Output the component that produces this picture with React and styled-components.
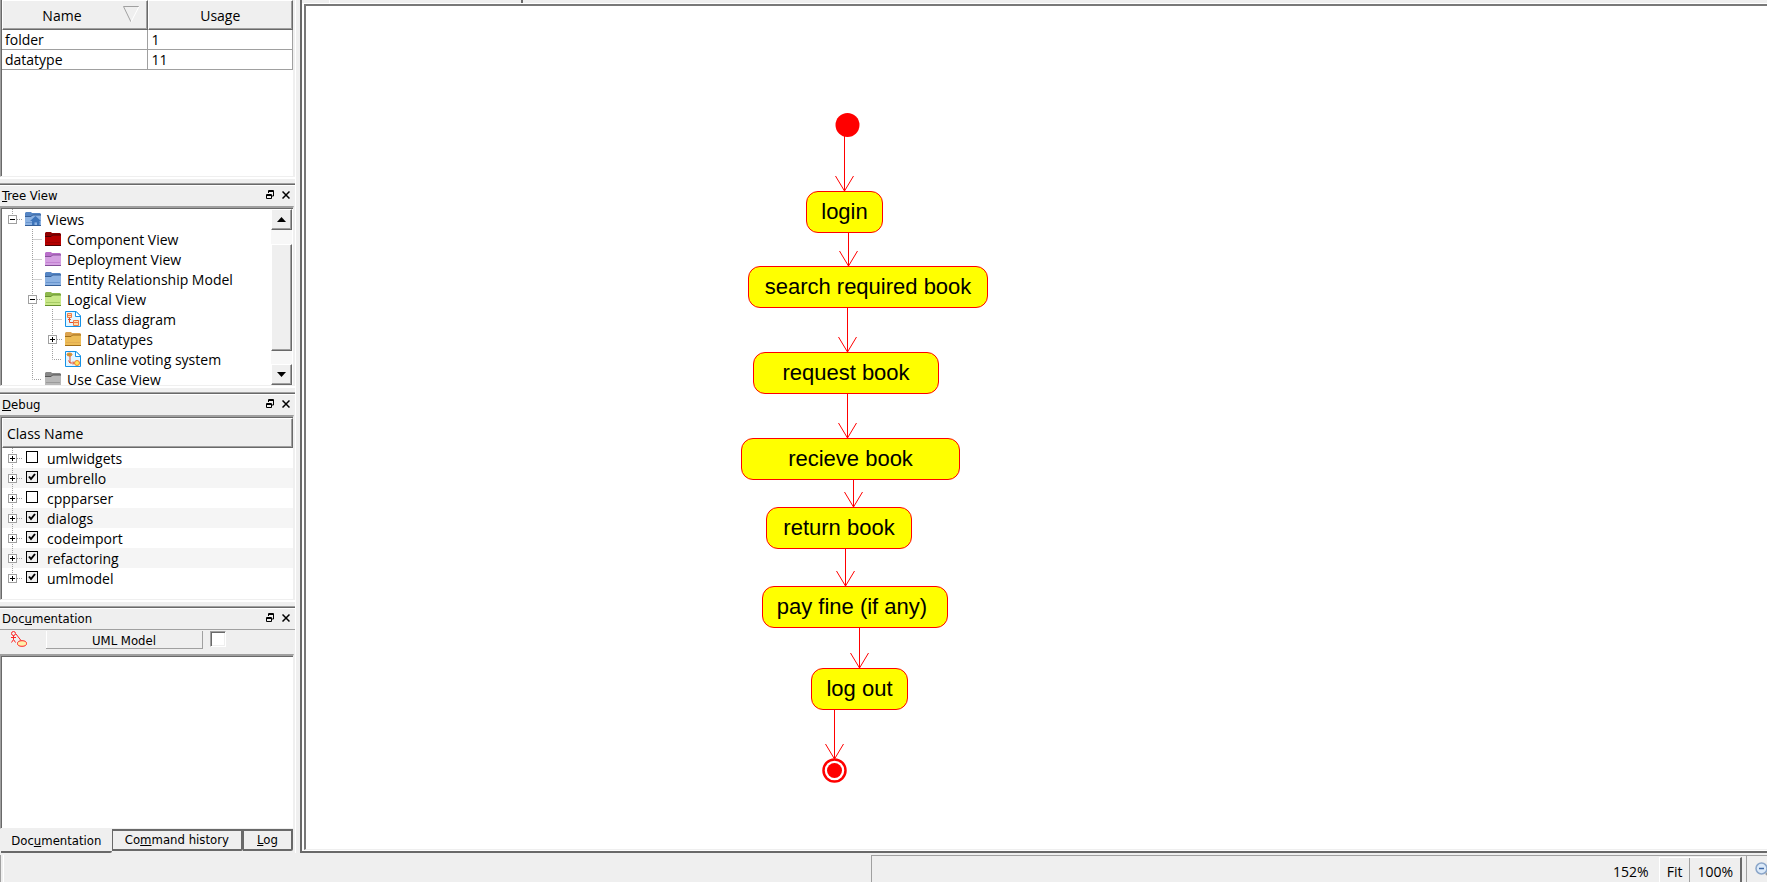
import React from "react";
import styled, { createGlobalStyle, css } from "styled-components";

const C = {
  face: "#efefef",
  light: "#ffffff",
  mid: "#a0a0a0",
  dark: "#696969",
  ink: "#000000",
  red: "#ff0000",
  yellow: "#ffff00",
};

const uiFont = `"Open Sans", "Noto Sans", sans-serif`;
const titleFont = `"DejaVu Sans Condensed", "DejaVu Sans", sans-serif`;

const Global = createGlobalStyle`
  *, *::before, *::after { box-sizing: border-box; }
  body { margin: 0; background: ${C.face}; color: ${C.ink}; font: 14px/20px ${uiFont}; }
  button, input, textarea { font: inherit; color: inherit; margin: 0; padding: 0; border: 0; border-radius: 0; }
  ul { list-style: none; margin: 0; padding: 0; }
  svg { display: block; flex: none; }
`;

const Page = styled.div`
  display: flex;
  flex-direction: column;
  min-height: 100vh;
`;

const Main = styled.div`
  display: flex;
  flex: 1;
`;

const Sidebar = styled.aside`
  display: flex;
  flex-direction: column;
  flex: none;
  width: 295px;
`;

const Splitter = styled.div`
  flex: none;
  height: 8px;
  border-top: 2px solid ${C.light};
  border-bottom: 1px solid ${C.dark};
  box-shadow: inset 0 -1px ${C.mid};
`;

const Dock = styled.section`
  display: flex;
  flex-direction: column;
  flex: ${(p) => (p.$grow ? "1" : "none")};
  height: ${(p) => (p.$height ? p.$height + "px" : "auto")};
`;

const DockTitle = styled.header`
  display: flex;
  align-items: flex-start;
  gap: 8px;
  flex: none;
  height: 21px;
  padding: 0 5px 0 2px;
  border-top: 1px solid ${C.light};
  font: 13px/20px ${titleFont};
`;

const DockName = styled.h2`
  flex: 1;
  margin: 0;
  font: inherit;
`;

const TitleButton = styled.button`
  width: 8px;
  height: 18px;
  background: none;
  display: flex;
  align-items: center;
  justify-content: center;
`;

const Sunken = styled.div`
  display: flex;
  flex: 1;
  min-height: 0;
  margin-right: 1px;
  overflow: hidden;
  background: ${C.light};
  border: 1px solid ${C.mid};
  border-right-color: ${C.face};
  border-bottom-color: ${C.face};
  border-top-width: ${(p) => (p.$openTop ? "0" : "2px")};
  box-shadow: inset 1px ${(p) => (p.$openTop ? "0" : "1px")} ${C.dark};
  padding: ${(p) => (p.$openTop ? "0" : "1px")} 0 0 1px;
`;

const raised = css`
  background: ${C.face};
  border: 1px solid ${C.light};
  border-right-color: ${C.dark};
  border-bottom-color: ${C.dark};
  box-shadow: inset -1px -1px ${C.mid};
`;

const UsageTable = styled.table`
  width: 291px;
  height: 70px;
  table-layout: fixed;
  border-collapse: separate;
  border-spacing: 0;
`;

const HeadCell = styled.th`
  ${raised}
  height: 30px;
  padding: 2px ${(p) => (p.$sorted ? "7px" : "0")} 0 0;
  font-weight: 400;
`;

const HeadContent = styled.div`
  display: flex;
  justify-content: ${(p) => (p.$sorted ? "flex-end" : "center")};
  align-items: flex-start;
  gap: 41px;
`;

const Cell = styled.td`
  height: 20px;
  padding: 0 0 0 ${(p) => (p.$first ? "3px" : "4px")};
  line-height: 19px;
  border-right: 1px solid ${C.mid};
  border-bottom: 1px solid ${C.mid};
`;

const Tree = styled.ul`
  flex: 1;
  min-width: 0;
`;

const Row = styled.li`
  display: flex;
  align-items: center;
  height: 20px;
  white-space: nowrap;
  background: ${(p) => (p.$alt ? "#f5f5f5" : "transparent")};
`;

const RowIcon = styled.span`
  margin: 0 6px 0 3px;
`;

const RowText = styled.span`
  height: 20px;
  line-height: 22px;
`;

const CheckLabel = styled.label`
  display: flex;
  align-items: center;
  gap: 9px;
  margin-left: 4px;
`;

const Check = styled.input.attrs({ type: "checkbox" })`
  appearance: none;
  width: 12px;
  height: 12px;
  margin-bottom: 2px;
  border: 1px solid ${C.ink};
  background: ${C.light};
  &:checked {
    background: ${C.face}
      url("data:image/svg+xml,%3Csvg xmlns='http://www.w3.org/2000/svg' viewBox='0 0 10 10'%3E%3Cpath d='M2 4.5 4 7 8 2' fill='none' stroke='%23000' stroke-width='2'/%3E%3C/svg%3E");
  }
`;

const ColumnHead = styled.div`
  ${raised}
  flex: none;
  width: 291px;
  height: 30px;
  padding: 1px 4px;
  line-height: 28px;
`;

const Column = styled.div`
  display: flex;
  flex-direction: column;
  flex: 1;
`;

const ScrollBar = styled.div`
  display: flex;
  flex-direction: column;
  flex: none;
  width: 21px;
  margin: 0 1px 0 0;
  background: #f7f7f7;
`;

const ScrollButton = styled.button`
  ${raised}
  display: flex;
  align-items: center;
  justify-content: center;
  height: 21px;
`;

const Thumb = styled.div`
  ${raised}
  height: 107px;
  margin: 14px 0 13px;
`;

const DocBar = styled.div`
  display: flex;
  align-items: flex-start;
  flex: none;
  height: 25px;
  padding: 1px 0 0 11px;
  border-top: 1px solid ${C.mid};
  font: 13px/17px ${titleFont};
`;

const ModelButton = styled.button`
  width: 157px;
  height: 18px;
  margin: 0 7px 0 19px;
  padding-top: 1px;
  background: ${C.face};
  border-right: 1px solid ${C.mid};
  border-bottom: 1px solid ${C.mid};
  box-shadow: inset 1px 0 ${C.light};
`;

const DocCheck = styled.input.attrs({ type: "checkbox" })`
  appearance: none;
  width: 16px;
  height: 16px;
  background: ${C.light};
  border: 1px solid ${C.mid};
  border-right-color: ${C.light};
  border-bottom-color: ${C.light};
  box-shadow: inset 1px 1px ${C.dark}, inset -1px -1px ${C.face};
`;

const DocText = styled.textarea`
  flex: 1;
  resize: none;
  outline: 0;
  background: ${C.light};
`;

const Tabs = styled.div`
  display: flex;
  align-items: flex-start;
  flex: none;
  height: 24px;
  padding: 0 2px 0 1px;
`;

const Tab = styled.button`
  height: ${(p) => (p.$active ? "24px" : "22px")};
  padding-top: ${(p) => (p.$active ? "2px" : "0")};
  flex: ${(p) => p.$share} 1 0;
  min-width: 0;
  white-space: nowrap;
  font: 13px/18px ${titleFont};
  background: ${C.face};
  border: solid ${C.dark};
  border-width: ${(p) => (p.$active ? "0 0 2px 0" : "2px 2px 2px 1px")};
  border-bottom-right-radius: 2px;
`;

const Gutter = styled.div`
  flex: none;
  width: 7px;
  border-right: 2px solid ${C.dark};
  border-left: 1px solid ${C.light};
`;

const Workspace = styled.main`
  display: flex;
  flex-direction: column;
  flex: 1;
  min-width: 0;
  background: ${C.light};
  border-bottom: 2px solid ${C.dark};
`;

const TopStrip = styled.div`
  display: flex;
  flex: none;
  height: 4px;
  background: ${C.face};
  border-bottom: 1px solid ${C.light};
`;

const StripPart = styled.div`
  width: ${(p) => p.$width}px;
  border-right: ${(p) => p.$edge};
`;

const Canvas = styled.div`
  position: relative;
  flex: 1;
  margin: 0 0 1px 2px;
  overflow: hidden;
  background: ${C.light};
  border: solid #787878;
  border-width: 2px 0 1px 2px;
  border-bottom-color: ${C.face};
`;

const Edges = styled.svg`
  position: absolute;
  left: 0;
  top: 0;
`;

const Activity = styled.div`
  position: absolute;
  left: ${(p) => p.$x}px;
  top: ${(p) => p.$y}px;
  width: ${(p) => p.$w}px;
  height: 42px;
  border: 1px solid ${C.red};
  border-radius: 12px;
  background: ${C.yellow};
  font: 22px/40px "Liberation Sans", Arial, sans-serif;
  text-align: center;
  white-space: pre;
`;

const Status = styled.footer`
  display: flex;
  flex: none;
  height: 29px;
  padding-top: 2px;
  overflow: hidden;
`;

const StatusPane = styled.div`
  display: flex;
  flex: 1;
  justify-content: flex-end;
  align-items: stretch;
  border-top: 1px solid ${C.mid};
  border-left: 1px solid ${C.mid};
  padding-right: 4px;
`;

const Message = styled.div`
  flex: 1;
  border-left: 1px solid ${C.mid};
  box-shadow: inset 2px 0 ${C.face}, inset 3px 0 ${C.light};
`;

const ZoomValue = styled.output`
  padding: 6px 10px 0 0;
`;

const ZoomButtons = styled.div`
  display: flex;
  align-items: stretch;
  margin-top: 1px;
  border-left: 1px solid ${C.light};
  border-top: 1px solid ${C.light};
  border-right: 2px solid ${C.dark};
`;

const ZoomButton = styled.button`
  display: flex;
  padding: 4px 7px 0;
  background: none;
  & + & { border-left: 1px solid ${C.mid}; }
`;

const ZoomOut = styled.button`
  flex: none;
  width: 21px;
  padding: 6px 0 0 8px;
  overflow: hidden;
  background: ${C.face};
  border-top: 1px solid ${C.mid};
  border-left: 1px solid ${C.mid};
  display: flex;
`;

const branchPaths = {
  blank: "",
  line: "M10.5 0V20",
  tee: "M10.5 0V20M10.5 10.5H20",
  end: "M10.5 0V10.5H20",
  root: "M10.5 0V6M15 10.5H20",
  through: "M10.5 0V20M15 10.5H20",
};

function Branch({ kind, mark }) {
  return (
    <svg width="20" height="20" fill="none" aria-hidden="true">
      <path d={branchPaths[kind]} stroke="#a0a0a0" strokeDasharray="1 1" />
      {mark && (
        <>
          <rect x="6.5" y="6.5" width="8" height="8" fill="#fff" stroke="#a0a0a0" />
          <path d={mark === "+" ? "M8 10.5H13M10.5 8V13" : "M8 10.5H13"} stroke="#000" />
        </>
      )}
    </svg>
  );
}

const folderColors = {
  red: ["#8f0000", "#b50000", "#4c0000"],
  purple: ["#b96fca", "#d5a0e2", "#87509a"],
  blue: ["#5585c4", "#8cb2e2", "#355f98"],
  green: ["#8fb94e", "#c9e888", "#67902f"],
  orange: ["#dca450", "#edbc57", "#a06d18"],
  gray: ["#888888", "#b8b8b8", "#555555"],
};

function Folder({ color, home }) {
  const [back, front, edge] = folderColors[color];
  return (
    <svg width="16" height="16" viewBox="0 0 16 16" aria-hidden="true">
      <path d="M0 2 1 1H6L7 2H15L16 3V14H0Z" fill={back} />
      <path d="M0 6H6L8 4H16V14H0Z" fill={front} />
      <path d="M0 5.5H6L7.5 4H16" fill="none" stroke={edge} />
      <path d="M0 14.5H16" stroke={edge} />
      <path d="M1 11.5H15" stroke={back} opacity="0.6" />
      {home && <path d="M10.5 5 16 10H14.5V14H12V11H9.500V14H7V10H5Z" fill="#3d74ba" />}
    </svg>
  );
}

function DiagramIcon({ activity }) {
  return (
    <svg width="16" height="16" viewBox="0 0 16 16" fill="none" aria-hidden="true">
      <path d="M.5.500H11L15.500 5V15.500H.5Z" fill="#e3f6ff" stroke="#1592e6" />
      <path d="M10.500 0V5.500H16Z" fill="#fff" stroke="#1592e6" />
      {activity ? (
        <>
          <ellipse cx="4.500" cy="3.500" rx="2.500" ry="1.500" fill="#b5a52a" stroke="#f07b32" />
          <path d="M5 5V12H9M3.500 9.500 5 12M8 10.500 9.500 12 8 13.500" stroke="#e34c2a" />
          <circle cx="12" cy="12" r="2.500" fill="#ffe75b" stroke="#f07b32" />
        </>
      ) : (
        <>
          <path d="M2.500 2.500H6.500V6.500H2.500ZM8.500 9.500H13.500V14.500H8.500ZM2.500 4.500H6.500M8.500 11.500H13.500" fill="#ffdcae" stroke="#f07b45" />
          <path d="M4.500 7V11.500H8M3 9 4.500 7.500 6 9" stroke="#e34c2a" />
        </>
      )}
    </svg>
  );
}

function Title({ before = "", accel, after }) {
  return (
    <DockTitle>
      <DockName>{before}<u>{accel}</u>{after}</DockName>
      <TitleButton aria-label="Float">
        <svg width="8" height="10" viewBox="0 0 8 10" fill="none" stroke="#000">
          <path d="M2.500 3V.500H7.500V6H6M2 1.500H8M.5 4.500H5.500V8.500H.5ZM0 5.500H6" />
        </svg>
      </TitleButton>
      <TitleButton aria-label="Close">
        <svg width="8" height="8" viewBox="0 0 8 8" stroke="#000" strokeWidth="1.500">
          <path d="M.5.500 7.500 7.500M7.500.500.500 7.500" />
        </svg>
      </TitleButton>
    </DockTitle>
  );
}

const views = [
  { text: "Views", branches: ["root"], mark: "-", icon: <Folder color="blue" home /> },
  { text: "Component View", branches: ["blank", "tee"], icon: <Folder color="red" /> },
  { text: "Deployment View", branches: ["blank", "tee"], icon: <Folder color="purple" /> },
  { text: "Entity Relationship Model", branches: ["blank", "tee"], icon: <Folder color="blue" /> },
  { text: "Logical View", branches: ["blank", "through"], mark: "-", icon: <Folder color="green" /> },
  { text: "class diagram", branches: ["blank", "line", "tee"], icon: <DiagramIcon /> },
  { text: "Datatypes", branches: ["blank", "line", "through"], mark: "+", icon: <Folder color="orange" /> },
  { text: "online voting system", branches: ["blank", "line", "end"], icon: <DiagramIcon activity /> },
  { text: "Use Case View", branches: ["blank", "end"], icon: <Folder color="gray" /> },
];

const classes = [
  ["umlwidgets", false],
  ["umbrello", true],
  ["cppparser", false],
  ["dialogs", true],
  ["codeimport", true],
  ["refactoring", true],
  ["umlmodel", true],
];

const activities = [
  { text: "login", x: 500, y: 185, w: 77 },
  { text: "search required book", x: 442, y: 260, w: 240 },
  { text: "request book", x: 447, y: 346, w: 186 },
  { text: "recieve book", x: 435, y: 432, w: 219 },
  { text: "return book", x: 460, y: 501, w: 146 },
  { text: "pay fine (if any) ", x: 456, y: 580, w: 186 },
  { text: "log out", x: 505, y: 662, w: 97 },
];

const flows = [
  [538.5, 130, 185],
  [542.5, 227, 260],
  [541.5, 302, 346],
  [541.5, 388, 432],
  [547.5, 474, 501],
  [539.5, 543, 580],
  [553.5, 622, 662],
  [528.5, 704, 753],
];

export default function App() {
  return (
    <Page>
      <Global />
      <Main>
        <Sidebar>
          <Dock $height={177}>
            <Sunken $openTop>
              <div>
                <UsageTable>
                  <thead>
                    <tr>
                      <HeadCell $sorted>
                        <HeadContent $sorted>
                          Name
                          <svg width="17" height="17" fill="none" aria-hidden="true">
                            <path d="M16 .5H.5L8 16" stroke="#a0a0a0" />
                            <path d="M8 16 16 .5" stroke="#fff" />
                          </svg>
                        </HeadContent>
                      </HeadCell>
                      <HeadCell><HeadContent>Usage</HeadContent></HeadCell>
                    </tr>
                  </thead>
                  <tbody>
                    <tr><Cell $first>folder</Cell><Cell>1</Cell></tr>
                    <tr><Cell $first>datatype</Cell><Cell>11</Cell></tr>
                  </tbody>
                </UsageTable>
              </div>
            </Sunken>
          </Dock>
          <Splitter />
          <Dock $height={201}>
            <Title accel="T" after="ree View" />
            <Sunken>
              <Tree>
                {views.map((v) => (
                  <Row key={v.text}>
                    {v.branches.map((b, i) => (
                      <Branch key={i} kind={b} mark={i === v.branches.length - 1 ? v.mark : undefined} />
                    ))}
                    <RowIcon>{v.icon}</RowIcon>
                    <RowText>{v.text}</RowText>
                  </Row>
                ))}
              </Tree>
              <ScrollBar>
                <ScrollButton aria-label="Scroll up">
                  <svg width="9" height="5"><path d="M0 5 4.500 0 9 5Z" /></svg>
                </ScrollButton>
                <Thumb />
                <ScrollButton aria-label="Scroll down">
                  <svg width="9" height="5"><path d="M0 0 4.500 5 9 0Z" /></svg>
                </ScrollButton>
              </ScrollBar>
            </Sunken>
          </Dock>
          <Splitter />
          <Dock $height={206}>
            <Title accel="D" after="ebug" />
            <Sunken>
              <Column>
                <ColumnHead>Class Name</ColumnHead>
                <Tree>
                  {classes.map(([name, on], i) => (
                    <Row key={name} $alt={i % 2 === 1}>
                      <Branch kind={i === classes.length - 1 ? "root" : "through"} mark="+" />
                      <CheckLabel>
                        <Check defaultChecked={on} />
                        <RowText>{name}</RowText>
                      </CheckLabel>
                    </Row>
                  ))}
                </Tree>
              </Column>
            </Sunken>
          </Dock>
          <Splitter />
          <Dock $grow>
            <Title before="Doc" accel="u" after="mentation" />
            <DocBar>
              <svg width="16" height="16" viewBox="0 0 16 16" fill="none" stroke="#f22" aria-hidden="true">
                <circle cx="2.500" cy="2.500" r="2" />
                <path d="M2.500 4.500V8.500L.5 11.500M2.500 8.500 4.500 11.500M0 6.500H5M5 3 10 9.500" />
                <ellipse cx="11" cy="12.500" rx="4.500" ry="2.800" fill="#ffefaa" />
              </svg>
              <ModelButton>UML Model</ModelButton>
              <DocCheck aria-label="Documentation present" />
            </DocBar>
            <Sunken>
              <DocText aria-label="Documentation" />
            </Sunken>
            <Tabs>
              <Tab $active $share={113}>Doc<u>u</u>mentation</Tab>
              <Tab $share={131}>Co<u>m</u>mand history</Tab>
              <Tab $share={48}><u>L</u>og</Tab>
            </Tabs>
          </Dock>
        </Sidebar>
        <Gutter />
        <Workspace>
          <TopStrip>
            <StripPart $width={28} $edge="1px solid #fff" />
            <StripPart $width={193} $edge="2px solid #696969" />
          </TopStrip>
          <Canvas>
            <Edges width="720" height="800" fill="none" stroke="#f00">
              {flows.map(([x, from, to]) => (
                <path key={from} d={`M${x} ${from}V${to}M${x - 9} ${to - 15}L${x} ${to}L${x + 9} ${to - 15}`} />
              ))}
              <circle cx="541.500" cy="119" r="12" fill="#f00" stroke="none" />
              <circle cx="528.500" cy="764.500" r="11" fill="#fff" strokeWidth="2.500" />
              <circle cx="528.500" cy="764.500" r="7.500" fill="#f00" stroke="none" />
            </Edges>
            {activities.map((a) => (
              <Activity key={a.text} $x={a.x} $y={a.y} $w={a.w}>{a.text}</Activity>
            ))}
          </Canvas>
        </Workspace>
      </Main>
      <Status>
        <Message />
        <StatusPane>
          <ZoomValue>152%</ZoomValue>
          <ZoomButtons>
            <ZoomButton>Fit</ZoomButton>
            <ZoomButton>100%</ZoomButton>
          </ZoomButtons>
        </StatusPane>
        <ZoomOut aria-label="Zoom out">
          <svg width="16" height="16" viewBox="0 0 16 16" fill="none">
            <circle cx="6.500" cy="6.500" r="5.500" fill="#dbe9f8" stroke="#8ba6c9" strokeWidth="1.500" />
            <path d="M4 6.500H9" stroke="#3d68a8" strokeWidth="1.500" />
            <path d="M11 11 15 15" stroke="#9a9a9a" strokeWidth="2.500" />
          </svg>
        </ZoomOut>
      </Status>
    </Page>
  );
}
